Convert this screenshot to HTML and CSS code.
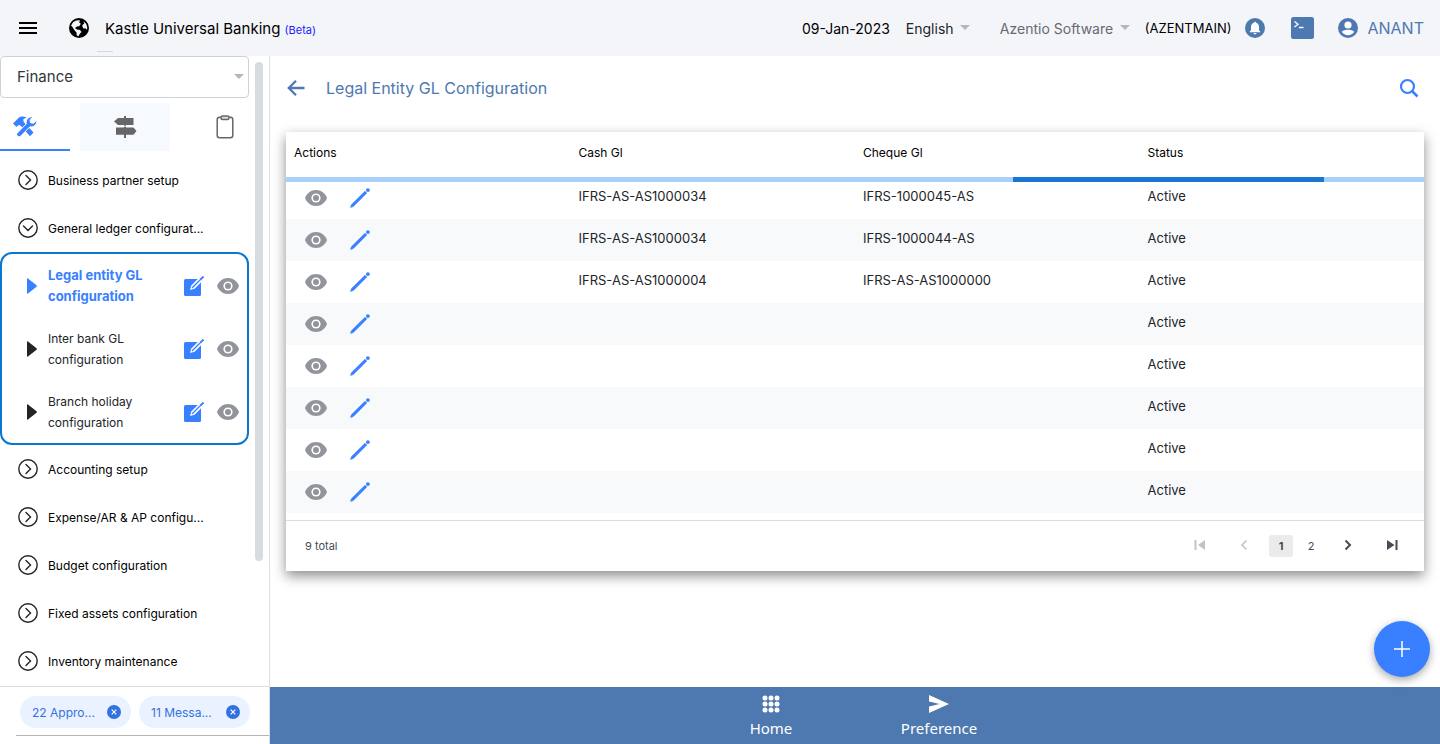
FILE: index.html
```html
<!DOCTYPE html>
<html lang="en">
<head>
<meta charset="utf-8">
<meta name="viewport" content="width=device-width, initial-scale=1">
<title>Kastle Universal Banking</title>
<link rel="stylesheet" href="styles.css">
</head>
<body>
<svg class="sprite" aria-hidden="true">
  <symbol id="eye" viewBox="0 0 24 24"><path fill="currentColor" d="M12 4C7 4 2.730 7.400 1 12c1.730 4.600 6 8 11 8s9.270-3.400 11-8c-1.730-4.600-6-8-11-8z"/><circle cx="12" cy="12" r="4.600" fill="#fff"/><circle cx="12" cy="12" r="3" fill="currentColor"/></symbol>
  <symbol id="pencil" viewBox="0 0 20 20"><path fill="currentColor" stroke="currentColor" stroke-linejoin="round" stroke-width=".6" d="M.6 19.400l.8-2.700L15 3.200l1.800 1.800L3.300 18.600z"/><circle cx="17.900" cy="2.100" r="1.900" fill="currentColor"/></symbol>
  <symbol id="compose" viewBox="0 0 20 20"><rect x="0" y="3" width="17" height="17" rx="1.500" fill="currentColor"/><path d="M6 14l1.300-4.600L15.500 1.200 18.800 4.500 10.600 12.700z" fill="#fff"/><path d="M8 12l7.700-7.700" stroke="currentColor" stroke-width="1.300"/><path d="M16 4l3.500-3.500" stroke="currentColor" stroke-width="1.800"/><path d="M10 2.200h6l-.8.800h-5.200z" fill="#fff"/></symbol>
  <symbol id="chev-right" viewBox="0 0 20 20"><circle cx="10" cy="10" r="9.200" fill="none" stroke="currentColor" stroke-width="1.400"/><path d="M8 5.500l4.500 4.500L8 14.500" fill="none" stroke="currentColor" stroke-width="1.400" stroke-linecap="round"/></symbol>
  <symbol id="chev-down" viewBox="0 0 20 20"><circle cx="10" cy="10" r="9.200" fill="none" stroke="currentColor" stroke-width="1.400"/><path d="M5.500 8l4.500 4.500L14.500 8" fill="none" stroke="currentColor" stroke-width="1.400" stroke-linecap="round"/></symbol>
  <symbol id="play" viewBox="0 0 10 16"><path fill="currentColor" d="M0 1Q0 0 1 .5L9.500 7.200Q10.400 8 9.500 8.800L1 15.500Q0 16 0 15z"/></symbol>
  <symbol id="close" viewBox="0 0 14 14"><circle cx="7" cy="7" r="7" fill="currentColor"/><path d="M4.700 4.700l4.600 4.600M9.300 4.700L4.700 9.300" stroke="#fff" stroke-width="1.200"/></symbol>
</svg>

<header class="topbar">
  <button class="icon-btn menu-btn" aria-label="Menu"><svg width="18" height="12" viewBox="0 0 18 12"><path fill="#000" d="M0 0h18v2H0zM0 5h18v2H0zM0 10h18v2H0z"/></svg></button>
  <svg class="globe" width="20" height="20" viewBox="0 0 20 20"><circle cx="10" cy="10" r="10" fill="#000"/><path fill="#f4f5f9" d="M2 7.500L4 4.300 7 2.500l4-.2-.8 2.200 1.600 1.300-1.600 2.400-2.200.3L6 10l2 1.400 3 .6 1.500 2-1.700 1.700-1.300 2.600-1.700-.8-.3-3L5.300 12 3.500 9zM14.500 3.200l2.800 2.700 1 3.600-.3 2.200-1.700-1.500-1.800.2L13.200 8.300l.6-1.800 1.400-.7z"/></svg>
  <h1 class="brand">Kastle Universal Banking <span class="beta">(Beta)</span></h1>
  <div class="top-right">
    <span class="date">09-Jan-2023</span>
    <span class="picker lang"><select class="picker-select" aria-label="Language"><option>English</option></select></span>
    <span class="picker company"><select class="picker-select" aria-label="Company"><option>Azentio Software</option></select></span>
    <span class="branch">(AZENTMAIN)</span>
    <button class="icon-btn bell" aria-label="Notifications"><svg width="20" height="20" viewBox="0 0 20 20"><circle cx="10" cy="10" r="10" fill="#4d79b0"/><path fill="#fff" d="M10 3.800c.6 0 1 .4 1 .9 2 .5 3 2.200 3 4.200v3.400l1.300 1.400v.6H4.700v-.6L6 12.300V8.900c0-2 1-3.700 3-4.200 0-.5.400-.9 1-.9zM8.600 15h2.800a1.400 1.400 0 0 1-2.800 0z"/></svg></button>
    <button class="icon-btn terminal" aria-label="Console"><svg width="23" height="22" viewBox="0 0 23 22"><rect width="23" height="22" rx="2.500" fill="#4d79b0"/><path d="M3.500 4.500l3.500 2.700-3.500 2.700M8 10.500h4.500" fill="none" stroke="#fff" stroke-width="1.300"/></svg></button>
    <button class="icon-btn user"><svg width="20" height="20" viewBox="0 0 20 20"><circle cx="10" cy="10" r="10" fill="#4d79b0"/><circle cx="10" cy="7" r="3.600" fill="#fff"/><path fill="#fff" d="M3.800 13.800C5 12.300 8 11.800 10 11.800s5 .5 6.200 2a7.300 7.300 0 0 1-12.400 0z"/></svg>ANANT</button>
  </div>
</header>

<div class="layout">
  <aside class="sidebar">
    <div class="side-scroll">
      <div class="side-content">
        <div class="module"><select class="module-select" aria-label="Module"><option>Finance</option></select></div>
        <div class="tabs">
          <button class="tab tab-first" aria-label="Setup"><svg width="24" height="21" viewBox="0 0 24 21"><g fill="#3880ff"><path d="M0 7.500L6.500 1Q10 0 13.500 1.300L10.200 3.500l.5 2.500L20.500 16.500l-3.500 3.700L7.500 9.500 5.500 9 3.500 11z"/><path stroke="#fff" stroke-width="1" d="M4 17.300l9.300-9.500C12.300 4 15.500.200 20 .7l-3 3.200.5 2.800 3 .6L23.700 4.200c.7 4.200-3 7.500-6.800 6.600L7.500 20.300c-2.200 1.200-4.700-1-3.500-3z"/></g></svg></button>
          <button class="tab tab-alt" aria-label="Directions"><svg width="24" height="22" viewBox="0 0 24 22"><g fill="#666"><rect x="11" y="0" width="2" height="22"/><path d="M5 2h15.500v7H5L1 5.500zM3 11.500h17.500l3 3.500-3 3.700H3z"/></g><path d="M3 10.200h18" stroke="#f6faff"/></svg></button>
          <button class="tab" aria-label="Clipboard"><svg width="18" height="24" viewBox="0 0 18 24"><g fill="none" stroke="#666" stroke-width="1.500"><rect x="1.200" y="2.200" width="15.600" height="20.500" rx="2.500"/><rect x="5" y="1" width="8" height="3.500" rx="1.500" fill="#ddd"/></g></svg></button>
        </div>
        <nav class="side-nav">
          <button class="nav-item"><svg class="ring"><use href="#chev-right"/></svg>Business partner setup</button>
          <button class="nav-item"><svg class="ring"><use href="#chev-down"/></svg>General ledger configurat...</button>
          <ul class="sub-list">
            <li class="sub-item active"><svg class="play"><use href="#play"/></svg><a class="sub-link" href="#">Legal entity GL configuration</a><button class="icon-btn compose" aria-label="Edit"><svg width="20" height="20"><use href="#compose"/></svg></button><button class="icon-btn eye" aria-label="View"><svg width="24" height="24"><use href="#eye"/></svg></button></li>
            <li class="sub-item"><svg class="play"><use href="#play"/></svg><a class="sub-link" href="#">Inter bank GL configuration</a><button class="icon-btn compose" aria-label="Edit"><svg width="20" height="20"><use href="#compose"/></svg></button><button class="icon-btn eye" aria-label="View"><svg width="24" height="24"><use href="#eye"/></svg></button></li>
            <li class="sub-item"><svg class="play"><use href="#play"/></svg><a class="sub-link" href="#">Branch holiday configuration</a><button class="icon-btn compose" aria-label="Edit"><svg width="20" height="20"><use href="#compose"/></svg></button><button class="icon-btn eye" aria-label="View"><svg width="24" height="24"><use href="#eye"/></svg></button></li>
          </ul>
          <button class="nav-item"><svg class="ring"><use href="#chev-right"/></svg>Accounting setup</button>
          <button class="nav-item"><svg class="ring"><use href="#chev-right"/></svg>Expense/AR &amp; AP configu...</button>
          <button class="nav-item"><svg class="ring"><use href="#chev-right"/></svg>Budget configuration</button>
          <button class="nav-item"><svg class="ring"><use href="#chev-right"/></svg>Fixed assets configuration</button>
          <button class="nav-item"><svg class="ring"><use href="#chev-right"/></svg>Inventory maintenance</button>
        </nav>
      </div>
      <div class="scroll-track"><div class="scroll-thumb"></div></div>
    </div>
    <div class="side-foot">
      <div class="chips">
        <span class="chip"><span>22 Appro...</span><button class="icon-btn chip-x" aria-label="Dismiss approvals"><svg width="14" height="14"><use href="#close"/></svg></button></span>
        <span class="chip"><span>11 Messa...</span><button class="icon-btn chip-x" aria-label="Dismiss messages"><svg width="14" height="14"><use href="#close"/></svg></button></span>
      </div>
    </div>
  </aside>

  <div class="content">
    <main class="page">
      <div class="page-head">
        <button class="icon-btn" aria-label="Back"><svg width="20" height="18" viewBox="0 0 20 18"><path d="M10 1.800L2.800 9l7.200 7.200M3 9h15.500" fill="none" stroke="#4d79b0" stroke-width="2.300"/></svg></button>
        <h2 class="page-title">Legal Entity GL Configuration</h2>
        <button class="icon-btn search" aria-label="Search"><svg width="20" height="20" viewBox="0 0 20 20"><circle cx="8.500" cy="8.500" r="6.500" fill="none" stroke="#3880ff" stroke-width="2.200"/><path d="M13 13l5.500 5.500" stroke="#3880ff" stroke-width="2.500"/></svg></button>
      </div>

      <section class="card">
        <div class="table-area">
          <table class="grid">
            <thead><tr><th scope="col">Actions</th><th scope="col">Cash Gl</th><th scope="col">Cheque Gl</th><th scope="col">Status</th></tr></thead>
            <tbody id="rows"></tbody>
          </table>
          <div class="progress" role="progressbar" aria-label="Loading"><div class="progress-bar"></div></div>
        </div>
        <footer class="pager">
          <span class="total">9 total</span>
          <div class="pages">
            <button class="icon-btn page-btn" disabled aria-label="First page"><svg width="12" height="12" viewBox="0 0 12 12"><path fill="#c1c3c6" d="M.5 1h2v10h-2zM11 1v10L4 6z"/></svg></button>
            <button class="icon-btn page-btn" disabled aria-label="Previous page"><svg width="12" height="12" viewBox="0 0 12 12"><path d="M8.500 1.500L4 6l4.500 4.500" fill="none" stroke="#c1c3c6" stroke-width="1.600"/></svg></button>
            <button class="page-num current" aria-current="page">1</button>
            <button class="page-num">2</button>
            <button class="icon-btn page-btn" aria-label="Next page"><svg width="12" height="12" viewBox="0 0 12 12"><path d="M3.500 1.500L8 6l-4.500 4.500" fill="none" stroke="#454c56" stroke-width="2"/></svg></button>
            <button class="icon-btn page-btn" aria-label="Last page"><svg width="12" height="12" viewBox="0 0 12 12"><path fill="#454c56" d="M9.500 1h2v10h-2zM1 1v10l7.500-5z"/></svg></button>
          </div>
        </footer>
      </section>
      <button class="fab" aria-label="Add"><svg width="16" height="16" viewBox="0 0 16 16"><path d="M8 0v16M0 8h16" stroke="#fff" stroke-width="1.500"/></svg></button>
    </main>

    <nav class="bottom-bar">
      <a class="bottom-link" href="#"><svg width="20" height="20" viewBox="0 0 20 20"><g fill="#fff"><circle cx="4" cy="4" r="2.500"/><circle cx="10" cy="4" r="2.500"/><circle cx="16" cy="4" r="2.500"/><circle cx="4" cy="10" r="2.500"/><circle cx="10" cy="10" r="2.500"/><circle cx="16" cy="10" r="2.500"/><circle cx="4" cy="16" r="2.500"/><circle cx="10" cy="16" r="2.500"/><circle cx="16" cy="16" r="2.500"/></g></svg>Home</a>
      <a class="bottom-link" href="#"><svg width="20" height="20" viewBox="0 0 20 20"><path fill="#fff" d="M0 1l20 9L0 19v-6.500L10.500 10 0 7.500z"/></svg>Preference</a>
    </nav>
  </div>
</div>
<script src="rows.js"></script>
</body>
</html>
```

FILE: styles.css
```css
* { box-sizing: border-box; }

body {
  margin: 0;
  height: 100vh;
  display: flex;
  flex-direction: column;
  overflow: hidden;
  font-family: Inter, "Liberation Sans", sans-serif;
  font-size: 13px;
  color: #000;
  background: #fff;
}

button, select { font: inherit; color: inherit; }

button {
  border: 0;
  padding: 0;
  background: none;
  cursor: pointer;
}

svg { display: block; flex: none; }

.sprite { position: absolute; width: 0; height: 0; }

.icon-btn { display: flex; align-items: center; flex: none; }

/* Top bar */
.topbar {
  display: flex;
  align-items: center;
  flex: none;
  height: 56px;
  padding: 0 16px 0 19px;
  background: #f4f5f9;
  position: relative;
}

.topbar::after {
  content: "";
  position: absolute;
  left: 97px;
  bottom: 4px;
  width: 16px;
  height: 1px;
  background: #d5d6da;
}

.globe { margin: 0 16px 0 32px; }

.brand { margin: 0; font-size: 15px; font-weight: 400; white-space: nowrap; }

.beta { font-size: 11px; color: #1a1aff; }

.top-right {
  display: flex;
  align-items: center;
  margin-left: auto;
  font-size: 14px;
  white-space: nowrap;
}

.date { margin-right: 16px; }

.picker { position: relative; color: #222428; }

.picker::after,
.module::after {
  content: "";
  position: absolute;
  top: 50%;
  right: 0;
  margin-top: -3px;
  border: 5px solid transparent;
  border-top-color: #b4b6ba;
  border-bottom: 0;
  pointer-events: none;
}

.picker-select {
  appearance: none;
  border: 0;
  padding: 0 16px 0 0;
  background: none;
}

.lang { margin-right: 30px; }
.company { margin-right: 15px; color: #666a70; }
.branch { font-size: 13px; }
.bell { margin-left: 14px; }
.terminal { margin-left: 26px; }
.user { gap: 9px; margin-left: 24px; font-size: 16px; color: #4d79b0; }

/* Page frame */
.layout { display: flex; flex: 1; min-height: 0; }

.sidebar {
  display: flex;
  flex-direction: column;
  flex: none;
  width: 270px;
  border-right: 1px solid #dedede;
}

.side-scroll { display: flex; flex: 1; min-height: 0; overflow: hidden; }
.side-content { width: 249px; overflow: hidden; }
.scroll-track { width: 14px; padding: 6px 0 0 6px; }
.scroll-thumb { height: 80%; border-radius: 4px; background: #d5dde0; }

.module { position: relative; }
.module::after { right: 5px; }

.module-select {
  appearance: none;
  width: 100%;
  height: 42px;
  padding: 0 16px 2px;
  border: 1px solid #cfd1d8;
  border-radius: 4px;
  background: #fff;
  font-size: 15px;
  color: #33363c;
}

.tabs { display: flex; gap: 10px; margin-top: 5px; }

.tab {
  display: flex;
  align-items: center;
  justify-content: center;
  flex: none;
  width: 90px;
  height: 48px;
}

.tab-first {
  width: 70px;
  justify-content: flex-start;
  padding-left: 13px;
  border-bottom: 2px solid #3880ff;
}

.tab-alt { background: #f6faff; }

.side-nav { padding-top: 5px; font-size: 12px; }

.nav-item {
  display: flex;
  align-items: center;
  gap: 10px;
  width: 100%;
  height: 48px;
  padding-left: 18px;
  text-align: left;
  white-space: nowrap;
}

.ring { width: 20px; height: 20px; color: #222428; }

.sub-list {
  margin: 0;
  padding: 0;
  list-style: none;
  border: 2px solid #0b78d0;
  border-radius: 12px;
}

.sub-item {
  display: flex;
  align-items: center;
  height: 63px;
  padding: 0 7px 0 24px;
  color: #222428;
}

.sub-item.active { color: #3880ff; font-size: 13px; font-weight: 700; }
.play { width: 12px; height: 16px; margin-right: 10px; }
.sub-link { flex: 1; padding-right: 20px; line-height: 21px; color: inherit; text-decoration: none; }
.compose { color: #3880ff; margin-right: 12px; }
.eye { color: #92949c; }

.side-foot {
  height: 58px;
  border-top: 1px solid #dedede;
}

.chips {
  display: flex;
  gap: 8px;
  margin-left: 16px;
  padding: 9px 0 7px 4px;
  border-bottom: 1px solid #b5b5b5;
  font-size: 12px;
}

.chip {
  display: flex;
  align-items: center;
  justify-content: space-between;
  width: 111px;
  height: 32px;
  padding: 0 10px 0 12px;
  border-radius: 16px;
  background: #ebf2ff;
  color: #3171e0;
  white-space: nowrap;
}

.chip-x { color: #3171e0; }

/* Main area */
.content { display: flex; flex-direction: column; flex: 1; min-width: 0; }
.page { position: relative; flex: 1; min-height: 0; padding: 0 16px; }

.page-head {
  display: flex;
  align-items: center;
  height: 64px;
  margin-bottom: 12px;
}

.page-title { margin: 0 0 0 20px; font-size: 16px; font-weight: 400; color: #4d79b0; }
.search { margin: 0 5px 0 auto; }

.card { background: #fff; box-shadow: 0 5px 12px rgba(0, 0, 0, .45); }

.table-area { position: relative; padding-bottom: 7px; border-bottom: 1px solid #dcdddd; }

.grid { width: 100%; table-layout: fixed; border-collapse: collapse; }

.grid th {
  height: 45px;
  padding: 0 8px 3px;
  border-bottom: 1px solid #dcdddd;
  font-size: 12px;
  font-weight: 400;
  text-align: left;
}

.grid td { height: 42px; padding: 0 8px 4px; color: #222428; }
.grid tbody tr:nth-child(even) { background: #f7f9fb; }
.grid .actions-cell { padding: 0 18px; }
.actions { display: flex; align-items: center; gap: 22px; }
.edit { color: #3880ff; }

.progress {
  position: absolute;
  top: 45px;
  left: 0;
  right: 0;
  height: 5px;
  background: #a8d0fa;
}

.progress-bar { width: 27.3%; height: 100%; margin-left: 63.9%; background: #1976d2; }

.pager {
  display: flex;
  align-items: center;
  justify-content: space-between;
  height: 50px;
  padding: 0 10px 0 19px;
  font-size: 11px;
  color: #454c56;
}

.pages { display: flex; align-items: center; }
.page-btn { width: 44px; height: 22px; padding-bottom: 2px; justify-content: center; }
.page-num { width: 24px; height: 22px; margin: 0 3px; border-radius: 3px; }
.page-num.current { background: #ebebeb; font-weight: 700; }

.fab {
  position: absolute;
  right: 10px;
  bottom: 10px;
  display: flex;
  align-items: center;
  justify-content: center;
  width: 56px;
  height: 56px;
  border-radius: 50%;
  background: #3880ff;
  box-shadow: 0 3px 8px rgba(0, 0, 0, .35);
}

.bottom-bar {
  display: flex;
  justify-content: center;
  gap: 84px;
  height: 57px;
  padding-top: 7px;
  background: #4d79b0;
}

.bottom-link {
  display: flex;
  flex-direction: column;
  align-items: center;
  width: 84px;
  font-family: "Noto Sans", sans-serif;
  font-size: 15px;
  line-height: 28px;
  color: #fff;
  text-decoration: none;
}
```

FILE: rows.js
```js
const rows = [
  ["IFRS-AS-AS1000034", "IFRS-1000045-AS"],
  ["IFRS-AS-AS1000034", "IFRS-1000044-AS"],
  ["IFRS-AS-AS1000004", "IFRS-AS-AS1000000"],
  ["", ""], ["", ""], ["", ""], ["", ""], ["", ""]
];

document.getElementById("rows").innerHTML = rows.map(([cash, cheque]) => `
  <tr>
    <td class="actions-cell"><div class="actions">
      <button class="icon-btn eye" aria-label="View"><svg width="24" height="24"><use href="#eye"/></svg></button>
      <button class="icon-btn edit" aria-label="Edit"><svg width="20" height="20"><use href="#pencil"/></svg></button>
    </div></td>
    <td>${cash}</td><td>${cheque}</td><td>Active</td>
  </tr>`).join("");
```
